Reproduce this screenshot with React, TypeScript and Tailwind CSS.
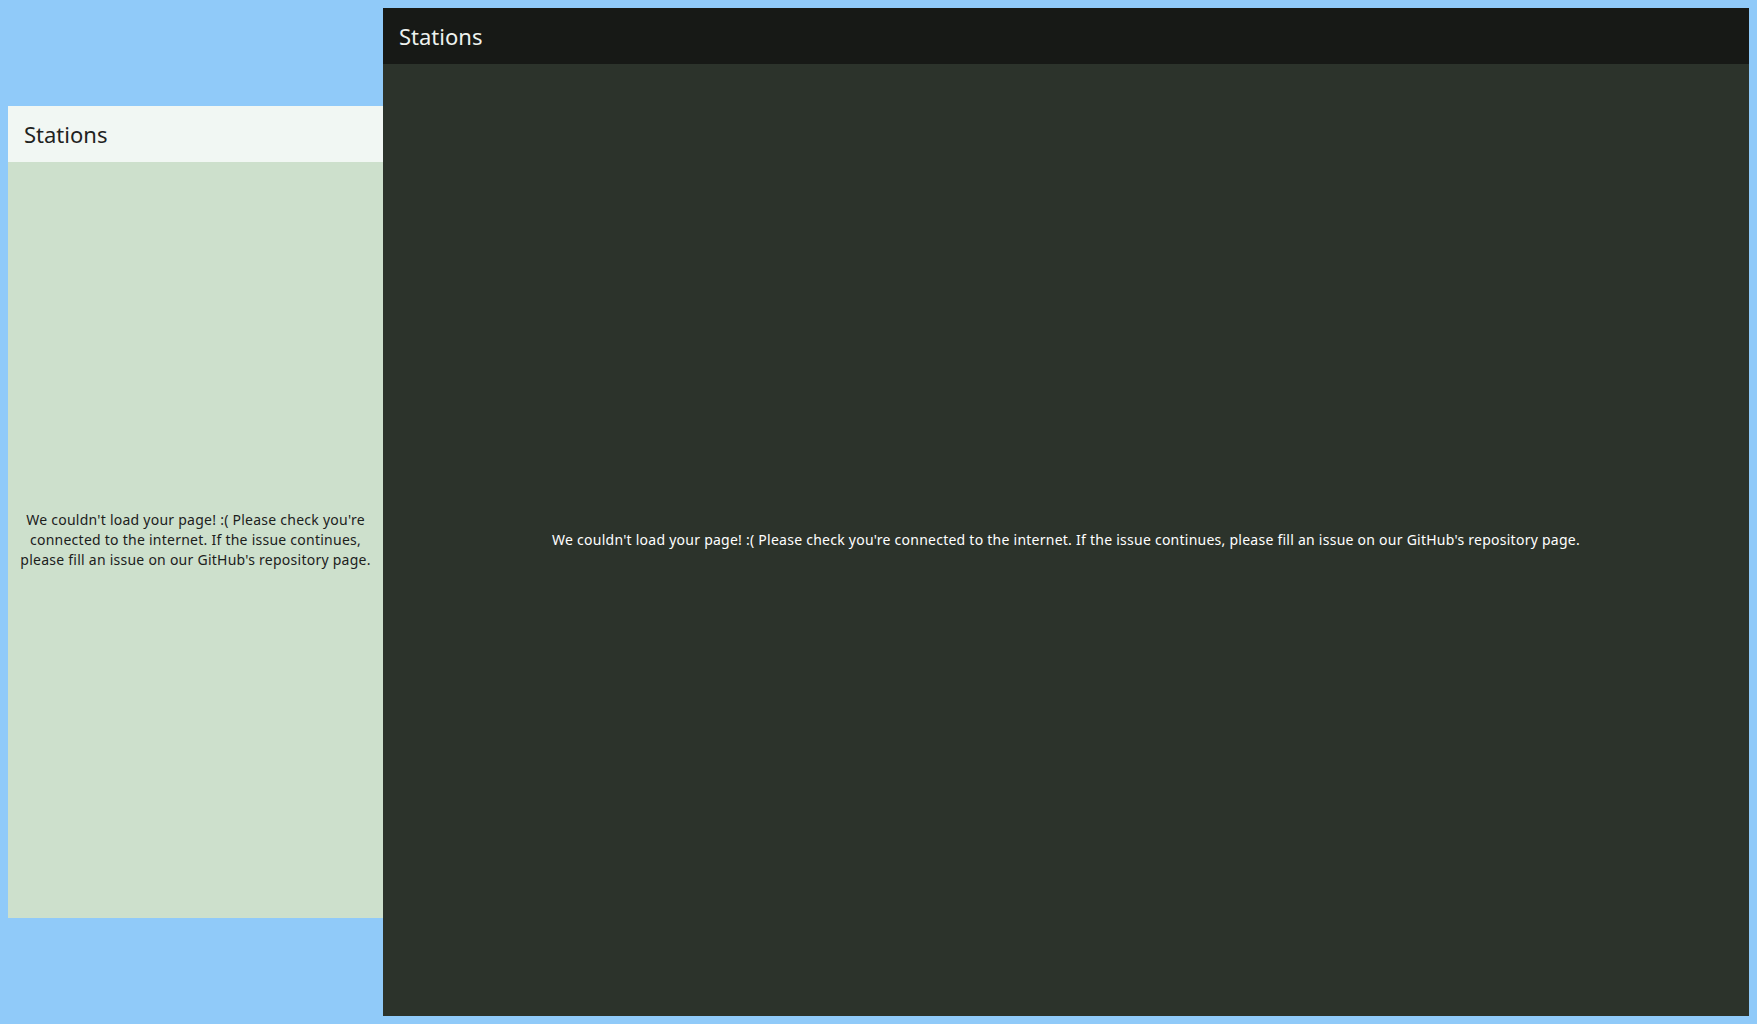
import React from 'react';

const MESSAGE =
  "We couldn't load your page! :( Please check you're connected to the internet. If the issue continues, please fill an issue on our GitHub's repository page.";

function Panel({ dark, className }: { dark?: boolean; className?: string }) {
  return (
    <section
      className={
        'flex flex-col ' +
        (dark ? 'bg-[#2c332b] text-[#ffffff] ' : 'bg-[#cde0cc] text-[#1c211c] ') +
        (className ?? '')
      }
    >
      <header
        className={
          'h-14 flex items-center px-4 shrink-0 ' +
          (dark ? 'bg-[#171916] text-[#eef2ee]' : 'bg-[#f1f7f3] text-[#1f231f]')
        }
      >
        <h1 className="text-[22px] font-normal">Stations</h1>
      </header>
      <div className="flex-1 flex items-center justify-center px-2">
        <p className="text-[14px] leading-5 tracking-[0.25px] text-center">{MESSAGE}</p>
      </div>
    </section>
  );
}

export default function App() {
  return (
    <div className="w-full h-[1024px] bg-[#90caf9] p-2 flex items-center font-['Noto_Sans',sans-serif]">
      <Panel className="w-[375px] h-[812px] shrink-0" />
      <Panel dark className="flex-1 h-full" />
    </div>
  );
}
